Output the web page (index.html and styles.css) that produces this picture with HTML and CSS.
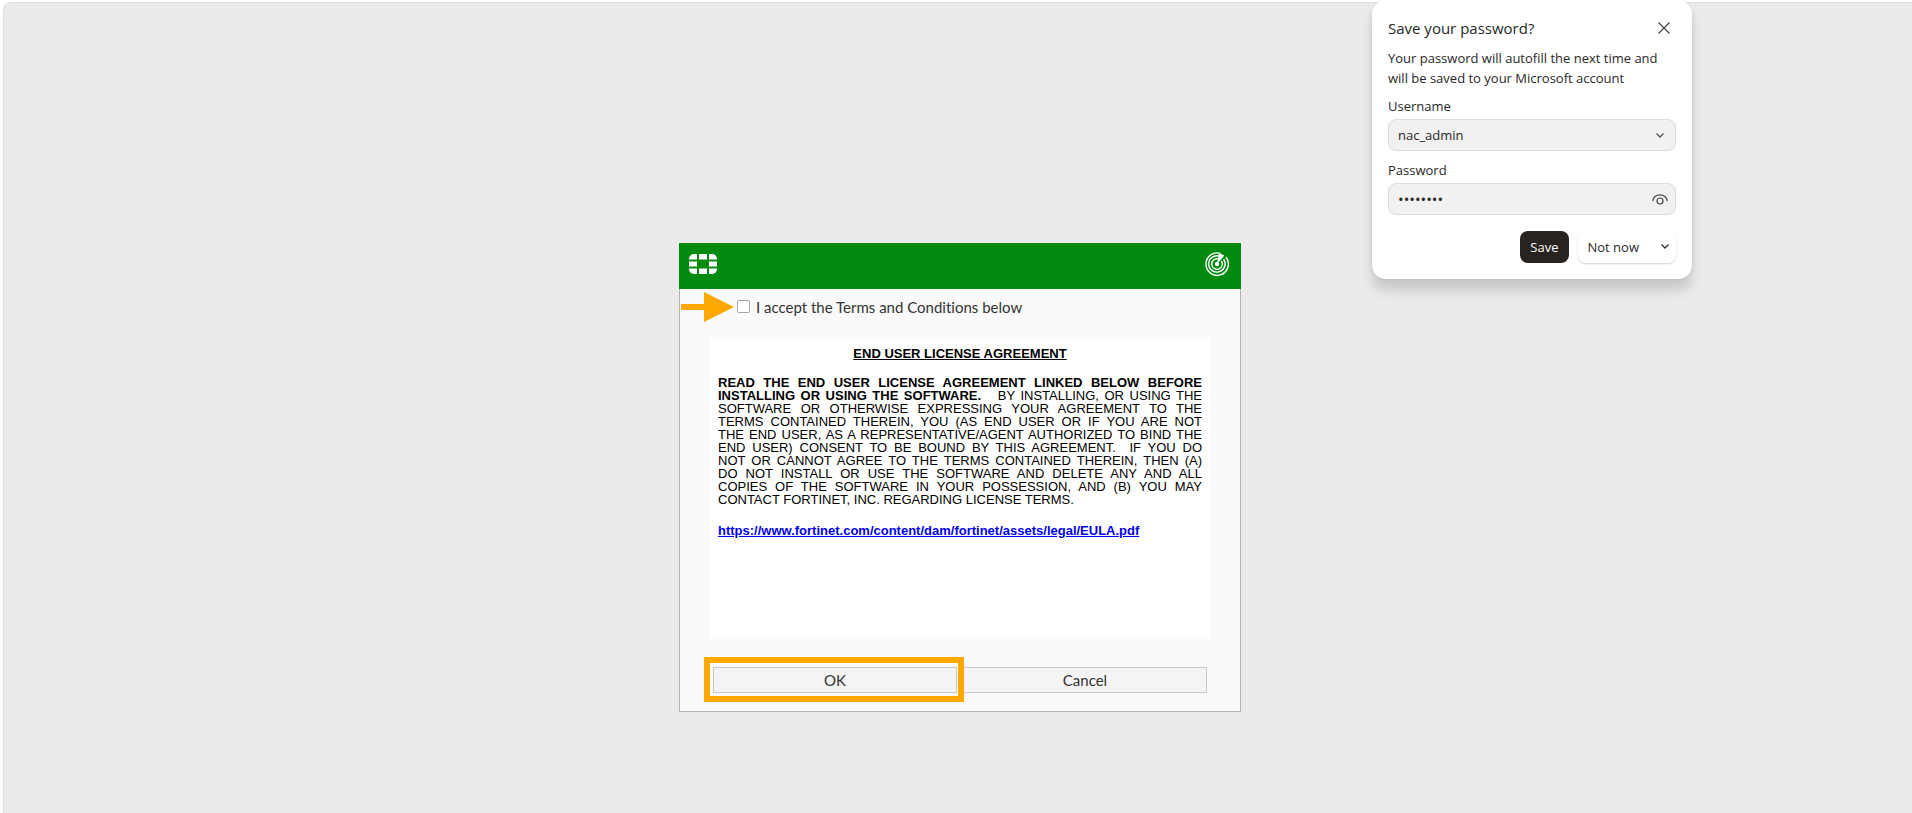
FILE: index.html
```html
<!DOCTYPE html>
<html lang="en">
<head>
    <meta charset="UTF-8">
    <title>End User License Agreement</title>
    <link rel="stylesheet" href="styles.css">
</head>
<body>
    <main class="page">
        <form class="dialog">
            <header class="dialog-header">
                <svg class="logo" viewBox="0 0 28 20" fill="#fff">
                    <path d="M5 0H8V5.500H0V5A5 5 0 0 1 5 0Z"/>
                    <path d="M10 0h8v5.500h-8z"/>
                    <path d="M20 0H23A5 5 0 0 1 28 5V5.500H20Z"/>
                    <path d="M0 7.500h8v5h-8zM20 7.500h8v5h-8z"/>
                    <path d="M0 14.500H8V20H5A5 5 0 0 1 0 15Z"/>
                    <path d="M10 14.500h8V20h-8z"/>
                    <path d="M20 14.500H28V15A5 5 0 0 1 23 20H20Z"/>
                </svg>
                <svg class="radar" viewBox="0 0 24 24" fill="none" stroke="#fff" stroke-width="1.400">
                    <path d="M21 5.200A11.200 11.200 0 1 1 15.500 1.400"/>
                    <path d="M18.600 7.200A8.200 8.200 0 1 1 14 4"/>
                    <path d="M16.400 9A5.300 5.300 0 1 1 13 6.800"/>
                    <circle cx="12" cy="12" r="2.200" fill="#fff" stroke="none"/>
                    <path d="M12 12L14 1.200L19.400 3.400Z" fill="#fff" stroke="none"/>
                </svg>
            </header>

            <div class="accept">
                <svg class="arrow" viewBox="0 0 53 30" fill="#ffa800">
                    <path d="M0 12H23V0L53 15L23 30V18H0Z"/>
                </svg>
                <input type="checkbox" id="accept">
                <label for="accept">I accept the Terms and Conditions below</label>
            </div>

            <section class="eula">
                <h1>END USER LICENSE AGREEMENT</h1>
                <p class="terms">
                    <strong>READ THE END USER LICENSE AGREEMENT LINKED BELOW BEFORE<br>
                    INSTALLING OR USING THE SOFTWARE.</strong>&nbsp;&nbsp; BY INSTALLING, OR USING THE<br>
                    SOFTWARE OR OTHERWISE EXPRESSING YOUR AGREEMENT TO THE<br>
                    TERMS CONTAINED THEREIN, YOU (AS END USER OR IF YOU ARE NOT<br>
                    THE END USER, AS A REPRESENTATIVE/AGENT AUTHORIZED TO BIND THE<br>
                    END USER) CONSENT TO BE BOUND BY THIS AGREEMENT.&nbsp; IF YOU DO<br>
                    NOT OR CANNOT AGREE TO THE TERMS CONTAINED THEREIN, THEN (A)<br>
                    DO NOT INSTALL OR USE THE SOFTWARE AND DELETE ANY AND ALL<br>
                    COPIES OF THE SOFTWARE IN YOUR POSSESSION, AND (B) YOU MAY
                </p>
                <p class="terms-end">CONTACT FORTINET, INC. REGARDING LICENSE TERMS.</p>
                <a href="https://www.fortinet.com/content/dam/fortinet/assets/legal/EULA.pdf">https://www.fortinet.com/content/dam/fortinet/assets/legal/EULA.pdf</a>
            </section>

            <div class="actions">
                <button type="button" class="btn btn-ok">OK</button>
                <button type="button" class="btn">Cancel</button>
            </div>
        </form>
    </main>

    <!-- browser password prompt -->
    <aside class="prompt">
        <div class="prompt-head">
            <h2>Save your password?</h2>
            <button type="button" class="icon-btn" aria-label="Close">
                <svg width="12" height="12" viewBox="0 0 12 12" stroke="#444" stroke-width="1.200"><path d="M0.500 0.500L11.500 11.500M11.500 0.500L0.500 11.500"/></svg>
            </button>
        </div>
        <p class="prompt-text">Your password will autofill the next time and will be saved to your Microsoft account</p>

        <label for="username">Username</label>
        <div class="field">
            <select id="username">
                <option>nac_admin</option>
            </select>
            <svg class="field-arrow" width="8" height="5" viewBox="0 0 8 5" fill="none" stroke="#555" stroke-width="1.300"><path d="M0.500 0.500L4 4L7.500 0.500"/></svg>
        </div>

        <label for="password">Password</label>
        <div class="field">
            <input type="password" id="password" value="password">
            <button type="button" class="icon-btn" aria-label="Show password">
                <svg width="16" height="11" viewBox="0 0 16 11" fill="none" stroke="#444" stroke-width="1.200"><path d="M0.600 7C1.500 3 4.500 0.800 8 0.800S14.500 3 15.400 7"/><circle cx="8" cy="7" r="3"/></svg>
            </button>
        </div>

        <div class="prompt-actions">
            <button type="button" class="save">Save</button>
            <div class="split">
                <button type="button">Not now</button>
                <button type="button" class="split-arrow" aria-label="More options">
                    <svg width="8" height="5" viewBox="0 0 8 5" fill="none" stroke="#333" stroke-width="1.300"><path d="M0.500 0.500L4 4L7.500 0.500"/></svg>
                </button>
            </div>
        </div>
    </aside>
</body>
</html>
```
FILE: styles.css
```css
* {
    box-sizing: border-box;
}

body {
    margin: 0;
    padding: 2px 0 0 3px;
    background-color: #fff;
    font-family: Lato, sans-serif;
    color: #333;
    overflow: hidden;
}

.page {
    min-height: calc(100vh - 2px);
    padding: 240px 0 40px 4px;
    background-color: #ebebeb;
    border-top: 1px solid #dedede;
    border-left: 1px solid #dedede;
    border-radius: 8px 0 0 0;
}

.dialog {
    width: 562px;
    margin: 0 auto;
    background-color: #fafafa;
    border: 1px solid #b5b5b5;
    border-top: none;
}

.dialog-header {
    display: flex;
    justify-content: space-between;
    align-items: center;
    height: 46px;
    margin: 0 -1px;
    padding: 0 12px 4px 10px;
    background-color: #038a10;
}

.logo {
    width: 28px;
    height: 20px;
}

.radar {
    width: 24px;
    height: 24px;
}

.accept {
    display: flex;
    align-items: center;
    height: 36px;
    padding-left: 1px;
    font-size: 15px;
    line-height: 20px;
}

.arrow {
    width: 53px;
    height: 30px;
}

.accept input {
    appearance: none;
    width: 13px;
    height: 13px;
    margin: 0 6px 2px 3px;
    background-color: #fff;
    border: 1px solid #a5a5a5;
    border-radius: 2px;
}

.accept input:checked {
    background-color: #038a10;
}

.accept label {
    font-variant-ligatures: none;
}

.eula {
    height: 300px;
    margin: 14px 30px 0;
    padding: 8px;
    overflow: auto;
    background-color: #fff;
    color: #000;
    font-family: "Liberation Sans", Arial, sans-serif;
    font-size: 13px;
    line-height: 13px;
}

.eula h1 {
    margin: 0 0 16px;
    font-size: 13px;
    line-height: 13px;
    text-align: center;
    text-decoration: underline;
}

.eula p {
    margin: 0;
}

.eula .terms {
    text-align: justify;
    text-align-last: justify;
}

.eula .terms-end {
    margin-bottom: 18px;
}

.eula a {
    color: #00e;
    font-weight: bold;
}

.actions {
    display: flex;
    gap: 6px;
    padding: 28px 33px 18px;
}

.btn {
    flex: 1;
    height: 26px;
    padding: 0;
    background-color: #f4f4f4;
    border: 1px solid #c8c8c8;
    color: #333;
    font-family: Lato, sans-serif;
    font-size: 15px;
}

.btn-ok {
    position: relative;
    z-index: 1;
}

/* marker frame over the button */
.btn-ok::after {
    content: "";
    position: absolute;
    inset: -11px -8px -10px -10px;
    border: 6px solid #ffa800;
}

/* password prompt */
.prompt {
    position: absolute;
    top: 0;
    right: 220px;
    width: 320px;
    padding: 16px;
    background-color: #fff;
    border-radius: 14px;
    box-shadow: 0 12px 12px rgba(0, 0, 0, 0.14), 0 0 4px rgba(0, 0, 0, 0.08);
    color: #282828;
    font-family: "Open Sans", sans-serif;
    font-size: 13px;
}

.prompt-head {
    display: flex;
    justify-content: space-between;
    align-items: center;
    height: 24px;
    padding-right: 6px;
}

.prompt h2 {
    margin: 0;
    font-size: 15px;
    font-weight: normal;
}

.prompt button,
.prompt input,
.prompt select {
    color: inherit;
    font: inherit;
    border: none;
    background: none;
}

.prompt .icon-btn {
    display: flex;
    padding: 0;
}

.prompt-text {
    margin: 8px 0;
    line-height: 20px;
}

.prompt label {
    display: block;
    height: 23px;
    line-height: 20px;
}

.field {
    position: relative;
    display: flex;
    align-items: center;
    height: 32px;
    margin-bottom: 9px;
    padding-right: 7px;
    background-color: #f1f1f1;
    border: 1px solid #dcdcdc;
    border-radius: 8px;
}

.field select,
.field input {
    flex: 1;
    min-width: 0;
    height: 100%;
    padding: 0 9px;
    appearance: none;
    outline: none;
}

.prompt .field input {
    font-size: 15px;
}

.field-arrow {
    margin-right: 4px;
    pointer-events: none;
}

.prompt-actions {
    display: flex;
    justify-content: flex-end;
    gap: 9px;
    margin-top: 16px;
}

.prompt .save {
    height: 32px;
    padding: 0 10px;
    background-color: #282320;
    border-radius: 8px;
    color: #fff;
}

.split {
    display: flex;
    height: 32px;
    border-radius: 8px;
    box-shadow: 0 1px 2px rgba(0, 0, 0, 0.2);
}

.split button {
    padding: 0 10px;
}

.prompt .split-arrow {
    display: flex;
    align-items: center;
    padding: 0 7px 2px 12px;
}
```
